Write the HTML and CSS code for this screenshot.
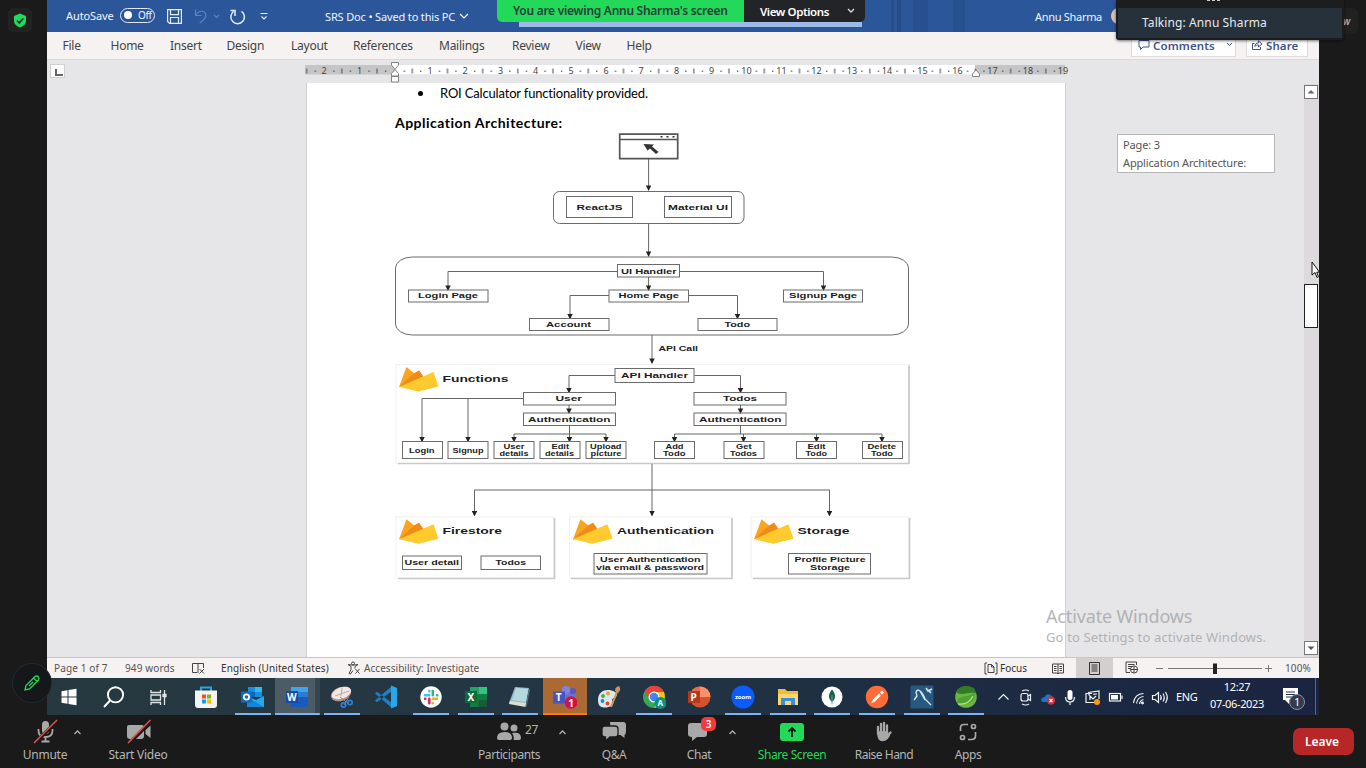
FILE: index.html
```
<!DOCTYPE html>
<html lang="en">
<head>
<meta charset="utf-8">
<title>Screen share</title>
<link rel="stylesheet" href="styles.css">
</head>
<body>
<main class="shared">
  <header class="titlebar">
    <span class="autosave">AutoSave</span>
    <span class="toggle"><i></i>Off</span>
    <svg class="qat" width="112" height="20" viewBox="0 0 112 20" fill="none" stroke="#e6eefb" stroke-width="1.2">
      <path d="M2.6 3.6h13.8v13.8H4.6l-2-2zM5.5 3.6v5h8v-5M5.500 17v-5.500h8V17"/>
      <g stroke="#5f83c0"><path d="M30.500 3.500v6h6M30.800 9.200c3-5 9-5.500 10 0 .3 3-3 5-6 8M49 9l2.500 2.500L54 9"/></g>
      <path stroke-width="1.500" d="M68.500 5.500a6.800 6.800 0 1 0 8-.2M65.500 4.500h4.500V10"/>
      <path d="M95.500 7.500h7M96.500 10.500l2.500 2.500 2.500-2.500"/>
    </svg>
    <span class="doc-name">SRS Doc • Saved to this PC</span>
    <svg class="doc-chev" width="10" height="8" fill="none" stroke="#fff" stroke-width="1.200"><path d="M1 2l4 4 4-4"/></svg>
    <span class="stripes"></span>
    <span class="owner">Annu Sharma</span>
    <span class="avatar"></span>
  </header>
  <nav class="menu">
    <span>File</span><span>Home</span><span>Insert</span><span>Design</span><span>Layout</span><span>References</span><span>Mailings</span><span>Review</span><span>View</span><span>Help</span>
    <b class="btn comments"><svg width="12" height="12" fill="none" stroke="#3f5490"><path d="M1 1.500h10v6.500H5L2.500 10.500V8H1z"/></svg>Comments<svg class="tiny" width="7" height="6" fill="none" stroke="#3f5490"><path d="M1 1l2.500 2.500L6 1"/></svg></b>
    <b class="btn share"><svg width="12" height="12" fill="none" stroke="#3f5490"><path d="M3.500 4.500H1.500v6h8V8M3.800 7.500C4 5 5.500 4 7.500 4V1.800L11 5 7.500 8V6C6 6 4.800 6.300 3.800 7.500z"/></svg>Share</b>
  </nav>
  <section class="workspace">
    <div class="gutter"><span class="tabstop"></span></div>
    <div class="column">
      <svg class="ruler" width="765" height="23" viewBox="305 60 765 23">
        <defs>
          <pattern id="ticks" x="394.700" y="60" width="35.200" height="23" patternUnits="userSpaceOnUse">
            <rect x="9" y="10.500" width="1.200" height="1.500" fill="#555"/><rect x="17" y="8.500" width="1.100" height="5" fill="#555"/><rect x="25.500" y="10.500" width="1.200" height="1.500" fill="#555"/>
          </pattern>
        </defs>
        <rect x="305" y="65" width="760" height="9.500" fill="#c6c5c6"/>
        <rect x="395" y="65" width="580" height="9.500" fill="#fff"/>
        <rect x="305" y="60" width="754" height="23" fill="url(#ticks)"/>
        <g class="nums">
          <text x="324">2</text><text x="359.500">1</text><text x="430">1</text><text x="465">2</text><text x="500.500">3</text><text x="535.500">4</text><text x="571">5</text><text x="606">6</text><text x="641">7</text><text x="676.500">8</text><text x="711.500">9</text><text x="746.500">10</text><text x="781.500">11</text><text x="816.500">12</text><text x="852">13</text><text x="887">14</text><text x="922.500">15</text><text x="957.500">16</text><text x="992.500">17</text><text x="1028">18</text><text x="1063">19</text>
        </g>
        <g fill="#fff" stroke="#777" stroke-width=".9"><path d="M391.500 62.500h7v2.500l-3.500 4.500-3.500-4.500z"/><path d="M391.500 76v-2.500l3.500-4 3.500 4V76zM391.500 76.500h7v5.500h-7zM972.500 76.500V74l3.500-4 3.500 4v2.500z"/></g>
      </svg>
      <article class="page">
        <p class="bullet"><i></i><span>ROI Calculator functionality provided.</span></p>
        <h1>Application Architecture:</h1>
        <svg class="diagram" width="520" height="452" viewBox="394 132 520 452">
          <defs>
            <marker id="a" viewBox="0 0 6 6" refX="5" refY="3" markerWidth="5.500" markerHeight="5.500" orient="auto" markerUnits="userSpaceOnUse"><path d="M0 0L6 3 0 6z" fill="#222"/></marker>
            <g id="fire"><path d="M0 20L7.500 0l8 6.500L20 3.500l5.500 8z" fill="#fba41d"/><path d="M0 20L15.500 6 20 3.500 26 12z" fill="#ee8b19"/><path d="M0 20L34.500 5l5 14.500-20 5z" fill="#ffca2d"/></g>
          </defs>
          <g class="panels">
            <rect x="396" y="364.500" width="513" height="99"/><rect x="396" y="517" width="158" height="61"/><rect x="569.500" y="517" width="162" height="61"/><rect x="751" y="517" width="158" height="61"/>
            <path class="edge" d="M398 463.500h511v-98M398 578.500h156.500V518M571 578.500h161V518M753 578.500h156.500V518"/>
          </g>
          <use href="#fire" x="399" y="367"/><use href="#fire" x="399" y="519.300"/><use href="#fire" x="573" y="519.300"/><use href="#fire" x="754" y="519.300"/>
          <g class="wires">
            <path d="M648.600 159v31"/><path d="M648.600 224v32"/>
            <path d="M618 271.500H448v18.500"/><path d="M680 271.500h143.500V290"/><path d="M648.600 277v13"/>
            <path d="M609 295.500h-39v23"/><path d="M689 295.500h48.500v23"/>
            <path d="M652 335v28"/><path d="M615 375.500h-46V392.500"/><path d="M694.500 375.500h46v17"/>
            <path d="M523 398.500H422V441.500"/><path d="M468 398.500v43"/><path d="M569 405v8"/><path d="M740.500 405v8"/>
            <path d="M569.500 426v8H514v7.500"/><path d="M569.500 434v7.500"/><path d="M569.500 434H606v7.500"/>
            <path d="M740.500 426v8h-66v7.500"/><path d="M743.500 434v7.500"/><path d="M740.500 434h141.500v7.500"/><path d="M816.500 434v7.500"/>
            <path d="M652 464v51.500"/><path d="M652 490H474.500v25.500"/><path d="M652 490h177.500v25.500"/>
          </g>
          <g class="boxes">
            <rect x="553.500" y="191.500" width="190.500" height="32" rx="6"/><rect x="395.500" y="257" width="513" height="78" rx="17" ry="11"/>
            <rect x="566.500" y="196.500" width="66" height="21"/><rect x="664.500" y="196.500" width="67" height="21"/>
            <rect x="617.500" y="264.500" width="62" height="12.500"/><rect x="408.500" y="290" width="79.500" height="12"/><rect x="609" y="290" width="79.500" height="12"/><rect x="783.500" y="290" width="79" height="12"/>
            <rect x="529.500" y="318.500" width="79.500" height="12"/><rect x="698" y="318.500" width="79" height="12"/>
            <rect x="615" y="368.500" width="79" height="14"/><rect x="523.500" y="392.500" width="92" height="12.500"/><rect x="523.500" y="413" width="92" height="12.500"/><rect x="694" y="392.500" width="92" height="12.500"/><rect x="694" y="413" width="92" height="12.500"/>
            <rect x="402.500" y="441.500" width="40" height="17"/><rect x="448" y="441.500" width="40" height="17"/><rect x="494" y="441.500" width="40" height="17"/><rect x="540" y="441.500" width="40" height="17"/><rect x="586" y="441.500" width="40" height="17"/>
            <rect x="654.500" y="441.500" width="40" height="17"/><rect x="724" y="441.500" width="40" height="17"/><rect x="796.500" y="441.500" width="40" height="17"/><rect x="862.500" y="441.500" width="40" height="17"/>
            <rect x="402.500" y="556" width="59" height="13.500"/><rect x="481" y="556" width="59.500" height="13.500"/><rect x="594" y="553.500" width="113" height="20.500"/><rect x="788.500" y="553.500" width="82" height="20.500"/>
            <path class="thick" d="M619.700 134.200h58v24.500h-58zM619.700 139.500h58"/>
          </g>
          <g fill="#333"><rect x="660.500" y="136" width="2" height="1.500"/><rect x="666.500" y="136" width="2" height="1.500"/><rect x="672.500" y="136" width="2" height="1.500"/><path d="M643.500 144l10.500.5-2 2 6.500 5.500-2.500 2-6-5.500-2.500 2z"/></g>
          <g class="labels">
            <g class="t8">
            <text x="576.500" y="210.500" textLength="46" lengthAdjust="spacingAndGlyphs">ReactJS</text><text x="668" y="210.500" textLength="60" lengthAdjust="spacingAndGlyphs">Material UI</text>
            <text x="621" y="274.500" textLength="55.500" lengthAdjust="spacingAndGlyphs">UI Handler</text><text x="418" y="299" textLength="60" lengthAdjust="spacingAndGlyphs">Login Page</text><text x="618.500" y="299" textLength="60.500" lengthAdjust="spacingAndGlyphs">Home Page</text><text x="789" y="299" textLength="68" lengthAdjust="spacingAndGlyphs">Signup Page</text>
            <text x="546" y="328" textLength="45" lengthAdjust="spacingAndGlyphs">Account</text><text x="724.500" y="328" textLength="25.500" lengthAdjust="spacingAndGlyphs">Todo</text><text x="658.500" y="352" textLength="39.500" lengthAdjust="spacingAndGlyphs">API Call</text>
            <text x="621" y="378.700" textLength="67" lengthAdjust="spacingAndGlyphs">API Handler</text><text x="555.500" y="401.700" textLength="26.500" lengthAdjust="spacingAndGlyphs">User</text><text x="528" y="422.700" textLength="82.500" lengthAdjust="spacingAndGlyphs">Authentication</text><text x="723" y="401.700" textLength="34" lengthAdjust="spacingAndGlyphs">Todos</text><text x="699" y="422.700" textLength="82.500" lengthAdjust="spacingAndGlyphs">Authentication</text>
            </g>
            <g class="t7">
            <text x="409" y="453.500" textLength="25.500" lengthAdjust="spacingAndGlyphs">Login</text><text x="452.500" y="453.500" textLength="31" lengthAdjust="spacingAndGlyphs">Signup</text>
            <text x="503.500" y="450" textLength="21" lengthAdjust="spacingAndGlyphs">User</text><text x="499.500" y="456.500" textLength="29" lengthAdjust="spacingAndGlyphs">details</text><text x="551.500" y="450" textLength="17.500" lengthAdjust="spacingAndGlyphs">Edit</text><text x="545" y="456.500" textLength="29" lengthAdjust="spacingAndGlyphs">details</text><text x="590" y="450" textLength="31.500" lengthAdjust="spacingAndGlyphs">Upload</text><text x="590.500" y="456.500" textLength="31" lengthAdjust="spacingAndGlyphs">picture</text>
            <text x="665.500" y="450" textLength="18" lengthAdjust="spacingAndGlyphs">Add</text><text x="663" y="456.500" textLength="22.500" lengthAdjust="spacingAndGlyphs">Todo</text><text x="736" y="450" textLength="15.500" lengthAdjust="spacingAndGlyphs">Get</text><text x="730" y="456.500" textLength="27" lengthAdjust="spacingAndGlyphs">Todos</text><text x="807.500" y="450" textLength="18" lengthAdjust="spacingAndGlyphs">Edit</text><text x="805.500" y="456.500" textLength="21.500" lengthAdjust="spacingAndGlyphs">Todo</text><text x="867.500" y="450" textLength="28.500" lengthAdjust="spacingAndGlyphs">Delete</text><text x="871" y="456.500" textLength="22" lengthAdjust="spacingAndGlyphs">Todo</text>
            <text x="404.500" y="565.300" textLength="54.500" lengthAdjust="spacingAndGlyphs">User detail</text><text x="495.500" y="565.300" textLength="30.500" lengthAdjust="spacingAndGlyphs">Todos</text><text x="600" y="562.300" textLength="100.500" lengthAdjust="spacingAndGlyphs">User Authentication</text><text x="596" y="570.300" textLength="108" lengthAdjust="spacingAndGlyphs">via email &amp; password</text><text x="794.500" y="562.300" textLength="71" lengthAdjust="spacingAndGlyphs">Profile Picture</text><text x="810" y="570.300" textLength="40" lengthAdjust="spacingAndGlyphs">Storage</text>
            </g>
            <g class="t9"><text x="442.500" y="382.300" textLength="66" lengthAdjust="spacingAndGlyphs">Functions</text><text x="442.500" y="534.700" textLength="59.500" lengthAdjust="spacingAndGlyphs">Firestore</text><text x="617" y="534.700" textLength="97" lengthAdjust="spacingAndGlyphs">Authentication</text><text x="797.500" y="534.700" textLength="52" lengthAdjust="spacingAndGlyphs">Storage</text></g>
          </g>
        </svg>
      </article>
    </div>
    <aside class="right"><div class="tip">Page: 3<br>Application Architecture:</div></aside>
    <div class="scroll"><span class="sb"><svg width="13" height="13"><path d="M2.500 7.500l3.500-3.500 3.500 3.500z" fill="#666"/></svg></span><span class="thumb"></span><span class="sb"><svg width="13" height="13"><path d="M2.500 4.500l3.500 3.500L9.500 4.500z" fill="#555"/></svg></span></div>
  </section>
  <footer class="status">
    <span class="s1">Page 1 of 7</span><span class="s2">949 words</span>
    <svg class="s3" width="15" height="14" fill="none" stroke="#444"><path d="M7 2.500v9.500M7 2.500H1.500v9H6M7 2.500h5.500V7M8.500 8l4.500 4.500M13 8l-4.500 4.500"/></svg>
    <span class="s4">English (United States)</span>
    <svg class="s5" width="14" height="14" fill="none" stroke="#444"><circle cx="6" cy="2.500" r="1.500"/><path d="M1 3.500l3 2v3l-2 4 1.500.5L6 9.500M11 3.500l-3 2v2M1 3.500l3.500.5h3L11 3.500M8.500 8l4 4.500M12.500 8l-4 4.500"/></svg>
    <span class="s6">Accessibility: Investigate</span>
    <svg class="s7" width="14" height="13" fill="none" stroke="#444"><path d="M3 1H1v11h2M11 1h2v11h-2M4 2.500h3.500L10 5v5.500H4zM7.500 2.500V5H10"/></svg>
    <span class="s8">Focus</span>
    <svg class="s9" width="14" height="13" fill="none" stroke="#444"><path d="M7 2v10M7 2H1.500v9H6l1 1 1-1h4.500V2zM3 4.500h2.500M3 6.500h2.500M3 8.500h2.500M8.500 4.500H11M8.500 6.500H11M8.500 8.500H11"/></svg>
    <span class="view-on"><svg width="11" height="13" fill="none" stroke="#333"><path d="M.5.5h10v12H.5zM2.500 3h6M2.500 5h6M2.500 7h6M2.500 9h6"/></svg></span>
    <svg class="s10" width="14" height="14" fill="none" stroke="#444"><path d="M11.500 4V1H1v10.500h4M3 3.500h6.500M3 5.500h4M3 7.500h2.500"/><circle cx="9" cy="8.500" r="3.600"/><path d="M5.500 8.500h7M9 5v7"/></svg>
    <svg class="zoomer" width="118" height="13" stroke="#777"><path d="M1 6.500h7M13 6.500h94M110 6.500h7M113.500 3v7"/><rect x="58.500" y="2" width="3" height="9.500" fill="#222" stroke="#222"/></svg>
    <span class="pct">100%</span>
  </footer>
  <div class="taskbar">
    <span class="cell"><svg viewBox="0 0 24 24"><path fill="#fff" d="M4.500 6.200l6-1v6.300h-6zM11.500 5l8-1.200v7.700h-8zM4.500 12.500h6v6.200l-6-.9zM11.500 12.500h8v7.700l-8-1.200z"/></svg></span>
    <span class="cell"><svg viewBox="0 0 24 24" fill="none" stroke="#fff" stroke-width="1.900"><circle cx="13.500" cy="9.800" r="7.600"/><path d="M8 15.500l-6 6.500"/></svg></span>
    <span class="cell"><svg viewBox="0 0 24 24" fill="none" stroke="#dfe6ea" stroke-width="1.300"><path d="M5 5v2.500h9.500V5M5 10h9.500v5H5zM5 20v-2.500h9.500V20M18.500 5v15M17 9.500h3v2h-3z"/></svg></span>
    <span class="cell store"><svg viewBox="0 0 24 24"><path d="M7 6V2.500h10V6" fill="none" stroke="#26a8e0" stroke-width="2"/><path d="M1 5.500h22V20q0 3-3 3H4q-3 0-3-3z" fill="#f3f3f3"/><path d="M8 9.500h4v4H8z" fill="#f25022"/><path d="M13 9.500h4v4h-4z" fill="#7fba00"/><path d="M8 14.500h4v4H8z" fill="#00a4ef"/><path d="M13 14.500h4v4h-4z" fill="#ffb900"/></svg></span>
    <span class="cell run outlook"><svg viewBox="0 0 24 24"><path d="M7 2h14v10H7z" fill="#1490df"/><path d="M14 2h7v5h-7z" fill="#35b8f1"/><path d="M7 7h7v5H7z" fill="#0364b8"/><path d="M6 20V11l9 4 8-4v11H6z" fill="#28a8ea"/><path d="M6 12l17 10H6z" fill="#1784d8"/><rect x="0" y="6.500" width="11" height="11" fill="#0f6cbd"/><circle cx="5.500" cy="12" r="2.700" fill="none" stroke="#fff" stroke-width="1.800"/></svg></span>
    <span class="cell run word"><svg viewBox="0 0 24 24"><path d="M6 2h17v20H6z" fill="#185abd"/><path d="M6 2h17v5H6z" fill="#41a5ee"/><path d="M6 7h17v5H6z" fill="#2b7cd3"/><rect x="1" y="6" width="12" height="12" fill="#174aa5"/><text x="2" y="16" class="ltr">W</text></svg></span>
    <span class="cell run"><svg viewBox="0 0 24 24"><ellipse cx="11" cy="9" rx="10.500" ry="6.800" fill="#b5928c" transform="rotate(-20 11 9)"/><ellipse cx="11.500" cy="7.800" rx="10" ry="5.600" fill="#f1e8e6" transform="rotate(-20 12 8)"/><path d="M12 3l-1 8M5 11l14-5" stroke="#c9a49e"/><path d="M10 12l9 7M19 12l-5 8" stroke="#7d8b93"/><g fill="none" stroke="#2684d8" stroke-width="1.700"><circle cx="13.500" cy="20" r="2.200"/><circle cx="20" cy="17.500" r="2.200"/></g></svg></span>
    <span class="cell"><svg viewBox="0 0 24 24"><path d="M1 8.500l2-1.700L18 18v5zM1 15.500l2 1.700L18 6V1z" fill="#1b80c8"/><path d="M17 .5l6 2.500v18l-6 2.500z" fill="#2ba5ea"/></svg></span>
    <span class="cell run"><svg viewBox="0 0 24 24"><circle cx="12" cy="12" r="10.700" fill="#fff"/><g stroke-width="2.500" stroke-linecap="round"><path d="M10.300 6v.3M6 10.300h4.300" stroke="#36c5f0"/><path d="M13.800 6v4.300M18 10.300h.2" stroke="#2eb67d"/><path d="M13.800 13.800h4.300M13.800 18v.2" stroke="#ecb22e"/><path d="M10.300 13.800v4.400M6 13.800h.3" stroke="#e01e5a"/></g></svg></span>
    <span class="cell run"><svg viewBox="0 0 24 24"><path d="M6 2h17v20H6z" fill="#107c41"/><path d="M14.500 2H23v7h-8.500z" fill="#33c481"/><path d="M6 2h8.500v7H6z" fill="#21a366"/><path d="M14.500 15H23v7h-8.500z" fill="#185c37"/><rect x="1" y="6" width="12" height="12" fill="#0e6c39"/><text x="3.500" y="16" class="ltr">X</text></svg></span>
    <span class="cell run"><svg viewBox="0 0 24 24"><path d="M7 2l14 1-3.500 18L1 18z" fill="#91bdc4"/><path d="M8 3l12 1-2 13L4 15z" fill="#b4d9de"/><path d="M2 16l16 2-.5 4L1 19z" fill="#e1ded0"/><path d="M21 4l1 1-3.500 17-1-1z" fill="#537985"/></svg></span>
    <span class="cell teams"><svg viewBox="0 0 24 24"><circle cx="13" cy="5" r="4" fill="#7b83eb"/><circle cx="20" cy="6" r="3" fill="#5059c9"/><path d="M8 9h15v8q-3 5-9 4-6-1-6-7z" fill="#6b72d0"/><rect x="0" y="6.500" width="12" height="12" fill="#4b53bc"/><text x="2.800" y="16" class="ltr">T</text><circle cx="18" cy="17.500" r="6.300" fill="#cf1346"/><text x="15.300" y="21.500" class="ltr">1</text></svg></span>
    <span class="cell"><svg viewBox="0 0 24 24"><path d="M1 15C1 5 11 3 18 7c3 2 2 5-1 6s-2 3-1 5-3 4.500-8 4.500S1 20 1 15z" fill="#dbe7ed"/><circle cx="6" cy="11" r="1.900" fill="#3fae49"/><circle cx="11" cy="8.500" r="1.900" fill="#e7a12c"/><circle cx="5.500" cy="16" r="1.900" fill="#2c83d5"/><circle cx="10.500" cy="18.500" r="1.900" fill="#d94436"/><path d="M20 7l-6 15" stroke="#d59a46" stroke-width="2"/><path d="M18 6c0-3 1-4 4-5 2 3 1 5-1 7z" fill="#c9955c"/></svg></span>
    <span class="cell run"><svg viewBox="0 0 24 24"><circle cx="12" cy="12" r="11" fill="#34a853"/><path d="M2.500 6.500A11 11 0 0 1 22 7H12z" fill="#ea4335"/><path d="M2.500 6.500L8 15l4-9z" fill="#ea4335"/><path d="M12 7h10q3 9-5 14.500L12 23l5-8z" fill="#fbc116"/><circle cx="12" cy="12" r="5.500" fill="#fff"/><circle cx="12" cy="12" r="4.200" fill="#4285f4"/><circle cx="18.500" cy="18" r="6" fill="#128c7e"/><text x="15.500" y="21" class="ltr sm">A</text></svg></span>
    <span class="cell"><svg viewBox="0 0 24 24"><circle cx="13" cy="12" r="10.500" fill="#d35230"/><path d="M13 1.500A10.500 10.500 0 0 1 23.500 12H13z" fill="#ff8f6b"/><path d="M13 1.500V12H2.500A10.500 10.500 0 0 1 13 1.500z" fill="#ed6c47"/><rect x="1" y="6" width="12" height="12" fill="#b7391d"/><text x="3.500" y="16" class="ltr">P</text></svg></span>
    <span class="cell run"><svg viewBox="0 0 24 24"><circle cx="12" cy="12" r="11.500" fill="#0b5cff"/><text x="4" y="14" class="zm" textLength="16">zoom</text></svg></span>
    <span class="cell run"><svg viewBox="0 0 24 24"><path d="M2 4h7l2 2h11v14H2z" fill="#f2bb40"/><path d="M2 9h20v11H2z" fill="#ffd86b"/><path d="M5 13h14v7h-4v-4H9v4H5z" fill="#3b8edb"/></svg></span>
    <span class="cell run"><svg viewBox="0 0 24 24"><circle cx="12" cy="12" r="10.500" fill="#fff"/><path d="M12 4.500c-4 5-4 9 0 12.500 4-3.500 4-7.500 0-12.500z" fill="#116149"/><path d="M12 10v9.500" stroke="#7ca88f"/></svg></span>
    <span class="cell run"><svg viewBox="0 0 24 24"><circle cx="12" cy="12" r="11.200" fill="#ff6c37"/><path d="M6 18.500l2-4 6-6 2 2-6 6zM15 7.500l2-2 2 2-2 2z" fill="#fff"/></svg></span>
    <span class="cell run"><svg viewBox="0 0 24 24"><rect x=".5" y=".5" width="23" height="23" rx="1" fill="#27587f"/><path d="M4 15l3-4-1-4q1-3 4-1 3 2 5 8l6 6M10 6l5 9" fill="none" stroke="#d9e8ef" stroke-width="1.300"/><path d="M16 3l2 3 4-2M18 5l3 3" fill="none" stroke="#d9e8ef" stroke-width="1.500"/></svg></span>
    <span class="cell run"><svg viewBox="0 0 24 24"><circle cx="12" cy="12" r="10.800" fill="#6db33f"/><path d="M2 7C5 1 14 0 20 3l2 6C17 5 8 12 2 7z" fill="#2e7d25"/><path d="M3 18c1-9 11-5 17-10 2 8-5 13-17 10z" fill="#4aa134"/><path d="M4 19c7 1 12-2 15-8" fill="none" stroke="#b6e38c" stroke-width="1.300"/></svg></span>
    <svg class="tray" width="190" height="24" viewBox="994 684 190 24" fill="none" stroke="#f1f4f8" stroke-width="1.200">
      <path d="M998.500 698.500l5-5 5 5"/>
      <rect x="1021" y="692.500" width="7" height="7.500" rx="2"/><path d="M1028 695l2.500-1.500v6l-2.500-1.500M1022 690q4-2 7 0M1022 703q4 2 7 0"/>
      <path d="M1041 700c0-3 2-4 4-4 1-4 6-3 7 0 3 0 3 4 0 5h-9z" fill="#1478c8" stroke="none"/><circle cx="1051" cy="699.500" r="4.200" fill="#cf3141" stroke="none"/><path d="M1049.500 698l3 3M1052.500 698l-3 3"/>
      <rect x="1067.500" y="689" width="5" height="10" rx="2.500" fill="#fff" stroke="none"/><path d="M1065.500 696q0 5 4.500 5t4.500-5M1070 701v3"/>
      <path d="M1095 701.500h-9v-9h5M1092 692.500h-3v2M1088 691.500l11-1.500v8M1090 699v-4l3 3 3-3M1094 694v-1h3"/><circle cx="1097" cy="701" r="3" fill="#ff9900" stroke="none"/>
      <rect x="1109.500" y="692.500" width="11" height="7.500"/><path d="M1122 694.500v3.500"/><rect x="1111" y="694" width="7" height="4.500" fill="#fff" stroke="none"/>
      <path d="M1133.500 702q1-9 10-9.500M1136.500 702.500q1-6.500 7-7M1139.500 703q.5-3.500 4-4.500" /><circle cx="1142.500" cy="702" r=".8" fill="#fff"/>
      <path d="M1152.500 694.500h2.500l3.500-3v10l-3.500-3h-2.500zM1160.500 694q1.500 2.500 0 5M1163 692.500q2.500 4 0 8M1165.500 691q3.500 5.500 0 11"/>
    </svg>
    <span class="lang">ENG</span>
    <span class="clock">12:27<br>07-06-2023</span>
    <svg class="notif" width="26" height="28"><path d="M3 5h15v12h-9v4l-4-4H3z" fill="#fff"/><path d="M6 9h9M6 11.500h9M6 14h6" stroke="#24304a"/><circle cx="17" cy="19" r="7.500" fill="#343b4c" stroke="#8b919d"/><text x="14" y="23" class="nn">1</text></svg>
    <span class="peek"></span>
  </div>
</main>

<div class="toolbar">
  <div class="tool unmute"><div class="ico"><svg width="26" height="26"><rect x="9" y="2" width="7" height="13" rx="3.500" fill="#a8a8a8"/><path d="M5.500 10v1.500q0 6.500 7 6.500t7-6.500V10M12.500 18v4M8.500 22.500h8" fill="none" stroke="#a8a8a8" stroke-width="1.800"/><path d="M2 24L24.500 1.500" stroke="#1a1a1a" stroke-width="3.500"/><path d="M1 24L24 1" stroke="#e5544e" stroke-width="1.500"/></svg></div>Unmute</div>
  <svg class="caret" width="9" height="6"><path d="M1.500 5l3-3 3 3"/></svg>
  <div class="tool video"><div class="ico"><svg width="26" height="26"><path d="M3 6h13q2 0 2 2v9q0 3-3 3H4q-3 0-3-3V8q0-2 2-2zM19.500 11l5-4.500V19l-5-4z" fill="#a8a8a8"/><path d="M3 24.500L25.500 2" stroke="#1a1a1a" stroke-width="3.500"/><path d="M2 24L24.500 1" stroke="#e5544e" stroke-width="1.500"/></svg></div>Start Video</div>
  <div class="tool people"><div class="ico"><svg width="26" height="22" fill="#a8a8a8"><circle cx="8.500" cy="5.500" r="4"/><circle cx="18" cy="7" r="3.500"/><path d="M1 17q0-6 7.500-6t7.500 6q0 2-3 2H4q-3 0-3-2zM16 12q9-1.500 9 5 0 2-3 2h-4.500q1-4-1.500-7z"/></svg><em>27</em></div>Participants</div>
  <svg class="caret c2" width="9" height="6"><path d="M1.500 5l3-3 3 3"/></svg>
  <div class="tool qa"><div class="ico"><svg width="26" height="22" fill="#a8a8a8"><path d="M9 1h13q3 0 3 3v6q0 3-1.500 4v3l-4-3H10z"/><path d="M4 5h10q3 0 3 3v5q0 3-3 3H9l-4.500 4v-4Q1 16 1 13V8q0-3 3-3z" stroke="#1a1a1a" stroke-width="1.300"/></svg></div>Q&amp;A</div>
  <div class="tool chat"><div class="ico"><svg width="24" height="22" fill="#a8a8a8"><path d="M4 2h13q3 0 3 3v8q0 3-3 3h-7l-5 4v-4Q1 16 1 13V5q0-3 3-3z"/></svg><span class="badge">3</span></div>Chat</div>
  <svg class="caret c3" width="9" height="6"><path d="M1.500 5l3-3 3 3"/></svg>
  <div class="tool sharescr"><div class="ico"><svg width="24" height="20"><rect y="1" width="24" height="18" rx="3" fill="#23d959"/><path d="M12 15V6M8.500 9.500L12 6l3.500 3.500" stroke="#151515" stroke-width="1.800" fill="none"/></svg></div>Share Screen</div>
  <div class="tool raise"><div class="ico"><svg width="20" height="22" fill="none" stroke="#a8a8a8" stroke-width="2.300" stroke-linecap="round"><path d="M4 13V6M7 11V3M10 11V2M13 12V4.500M13 15l3.500-3.500"/><path d="M4 11h9v3l3-2q-2 7-7 7.500Q4 20 4 13z" fill="#a8a8a8" stroke-width="1.500"/></svg></div>Raise Hand</div>
  <div class="tool apps"><div class="ico"><svg width="18" height="18" fill="none" stroke="#a8a8a8" stroke-width="1.700"><path d="M1.500 8V5q0-3.500 3.500-3.500h4M16.500 9v3.500q0 4-4 4H9"/><circle cx="14.500" cy="3.500" r="2"/><circle cx="3.500" cy="14.500" r="2"/></svg></div>Apps</div>
  <button class="leave">Leave</button>
</div>

<div class="banner"><span class="viewing">You are viewing Annu Sharma's screen</span><span class="options">View Options<svg width="8" height="6" fill="none" stroke="#ddd" stroke-width="1.300"><path d="M1 1l3 3 3-3"/></svg></span></div>
<div class="name-pill"><i>w</i></div>
<div class="talking"><span class="grip"></span><div>Talking: Annu Sharma</div></div>
<div class="shield"><svg width="14" height="15"><path d="M7 .5l6 2.500v5q0 4-6 6.500Q1 12 1 8V3z" fill="#23d959"/><path d="M4 7.500l2.300 2.300L10.300 5.500" stroke="#123" stroke-width="1.500" fill="none"/></svg></div>
<div class="pen"><svg width="18" height="18" fill="none" stroke="#23d959" stroke-width="1.300"><path d="M2 16l1-4.500 9-9q1.700-1.200 3.200.3t.3 3.200l-9 9zM10.500 4l3.500 3.500M6 12l4-4"/></svg></div>
<div class="wm"><strong>Activate Windows</strong><span>Go to Settings to activate Windows.</span></div>
<svg class="pointer" width="10" height="18"><path d="M1 1v13l3-2.500 2 5 1.500-.8-1.800-4.500h2.800z" fill="#fff" stroke="#111"/></svg>
</body>
</html>
```
FILE: styles.css
```
* { box-sizing: border-box; }
body { margin: 0; width: 1366px; height: 768px; overflow: hidden; position: relative; background: #1a1a1a; font-family: "Noto Sans", "Open Sans", sans-serif; font-size: 12px; color: #444; white-space: nowrap; }
svg { display: block; flex: none; }
i, em { font-style: normal; }
.shared { width: 1272px; height: 715px; margin-left: 47px; display: flex; flex-direction: column; }

.titlebar { height: 32px; flex: none; background: #2b569a; display: flex; align-items: center; color: #f0f5ff; font-size: 11px; overflow: hidden; }
.titlebar > * { flex: none; }
.autosave { margin: -2px 0 0 19px; width: 54px; letter-spacing: -.1px; }
.toggle { width: 35px; height: 15px; margin-top: -2px; border: 1.300px solid #dfe9fa; border-radius: 8px; display: flex; align-items: center; padding-left: 3px; gap: 6px; font-size: 10px; letter-spacing: -.4px; }
.toggle i { width: 8px; height: 8px; border-radius: 50%; background: #fff; }
.qat { margin-left: 10px; }
.doc-name { margin-left: 48px; width: 134px; letter-spacing: -.15px; }
.stripes { width: 230px; height: 32px; margin-left: 414px; background: linear-gradient(90deg, transparent 0 8px, #264c89 8px 11px, transparent 11px 14px, #264c89 14px 18px, transparent 18px 30px, #285090 30px 45px, transparent 45px 70px, #27508f 70px 82px, transparent 82px); }
.owner { margin-left: -78px; width: 76px; letter-spacing: -.3px; }
.avatar { width: 26px; height: 20px; border-radius: 50%; background: #dcbfa6; }

.menu { height: 28px; flex: none; background: #f5f2f1; display: grid; grid-template-columns: 48px 59.500px 56.500px 64.500px 62px 86px 73px 63.500px 51px 504.500px 105px 10px 62px; padding-left: 15.500px; align-items: center; border-bottom: 1px solid #dcdad6; letter-spacing: -.25px; }
.btn { align-self: start; height: 25px; background: #fff; border: 1px solid #dedcdb; color: #3f5490; display: flex; align-items: center; gap: 3px; padding: 1px 0 0 6px; font-weight: 600; font-size: 11.500px; letter-spacing: .1px; }
.btn .tiny { margin-left: 8px; }
.share { grid-column: 13; padding-left: 4px; }

.workspace { flex: 1; background: #e6e6e8; display: flex; min-height: 0; }
.gutter { width: 258px; padding: 4px 3px; }
.tabstop { display: block; width: 15px; height: 14px; background: #fff; border: 1px solid #d0d0d0; }
.tabstop::after { content: ""; display: block; width: 6px; height: 5px; margin: 4px 0 0 4px; border: solid #666; border-width: 0 0 2px 2px; }
.column { width: 765px; flex: none; }
.nums text { font: 9px "Noto Sans", sans-serif; fill: #444; text-anchor: middle; transform: translateY(74px); stroke: none; }
.page { margin-left: 1px; width: 760px; height: 574px; background: #fff; border: solid #cfcfd1; border-width: 0 1px; padding-left: 88px; color: #000; font-family: Lato, "Open Sans", sans-serif; font-variant-ligatures: none; }
.bullet { margin: 0; height: 21px; display: flex; align-items: center; font-size: 13px; padding-left: 23px; letter-spacing: -.17px; }
.bullet i { width: 5px; height: 5px; border-radius: 50%; background: #000; margin-right: 17px; }
.bullet span { margin-top: -1px; }
h1 { margin: 9px 0 0; height: 19px; line-height: 20px; font-size: 14px; font-weight: 700; letter-spacing: .48px; }
.diagram { margin-left: -1px; }
.panels rect { fill: #fff; stroke: #f0f0f0; }
.edge { fill: none; stroke: #c9c9c9; stroke-width: 1.700; }
.wires path { fill: none; stroke: #666; marker-end: url(#a); }
.wires path:first-child { stroke: #666; }
#a path { stroke: none; }
.boxes rect, .boxes path { fill: none; stroke: #6b6b6b; }
.boxes .thick { stroke-width: 1.700; stroke: #555; }
.labels { font-family: "Liberation Sans", sans-serif; font-weight: 700; fill: #1c1c1c; transform: translateY(-.6px); }
.t8 { font-size: 8px; }
.t7 { font-size: 7.300px; }
.t9 { font-size: 9.500px; }
.right { flex: 1; padding: 74px 0 0 47px; }
.tip { width: 158px; height: 39px; border: 1px solid #b6b6b8; background: #fff; padding: 1px 5px; line-height: 18px; font-size: 11px; color: #555; letter-spacing: -.15px; }
.scroll { width: 15px; display: flex; flex-direction: column; background: linear-gradient(#e6e6e8 24px, #dcdadd 24px); padding-top: 25px; }
.sb { width: 14px; height: 14px; border: 1px solid #777; background: #fff; }
.thumb { width: 14px; height: 44px; border: 1px solid #222; background: #fff; margin: 185px 0 313px; }

.status { height: 21px; flex: none; background: #f5f2f1; border-top: 1px solid #c9c7c6; display: flex; align-items: center; font-size: 10px; color: #555; }
.s1 { margin-left: 7px; width: 71px; letter-spacing: .12px; }
.s2 { width: 66px; letter-spacing: .12px; }
.s4 { margin-left: 15px; width: 126px; color: #333; letter-spacing: .1px; }
.s6 { margin-left: 3px; width: 620px; letter-spacing: .05px; }
.s8 { margin-left: 2px; width: 51px; color: #333; }
.view-on { width: 37px; height: 20px; margin-left: 11px; background: #d2cfce; display: grid; place-items: center; }
.s10 { margin-left: 12px; }
.zoomer { margin-left: 16px; }
.pct { margin-left: 12px; letter-spacing: .1px; }

.taskbar { height: 37px; flex: none; background: linear-gradient(90deg, #263940, #233544 45%, #1c2b42 75%, #1b2440); display: flex; align-items: center; }
.cell { width: 44.600px; height: 37px; flex: none; display: flex; align-items: center; justify-content: center; }
.cell svg { width: 24px; height: 24px; }
.run { background: linear-gradient(#7ab5f2, #7ab5f2) center bottom / 36px 2px no-repeat; }
.store { margin-left: 3px; }
.outlook { margin-left: 2px; }
.word { background: linear-gradient(#7ab5f2, #7ab5f2) bottom / 100% 2px no-repeat, linear-gradient(90deg, #4b5c66 40px, #34464f 40px); }
.teams { background: linear-gradient(#ff7a0a, #ff7a0a) bottom / 100% 2px no-repeat, #ab6a34; }
.ltr { font: 700 10px "Noto Sans", sans-serif; fill: #fff; }
.sm { font-size: 8px; }
.zm { font: 700 6px "Noto Sans", sans-serif; fill: #fff; }
.tray { margin-left: 5.500px; }
.lang { width: 30px; margin-left: -8px; color: #fff; font-size: 11px; letter-spacing: -.3px; }
.clock { width: 60px; margin: -3px 0 0 1px; color: #fff; font-size: 11px; line-height: 17px; text-align: center; letter-spacing: -.35px; }
.notif { margin-left: 13px; }
.nn { font: 11px "Noto Sans", sans-serif; fill: #fff; }
.peek { width: 1px; height: 37px; background: #5d6577; margin-left: 9px; }

.toolbar { height: 53px; display: flex; align-items: flex-start; color: #b5b5b5; font-size: 12px; letter-spacing: -.4px; padding-right: 12px; }
.tool { display: flex; flex-direction: column; align-items: center; line-height: 18px; flex: none; }
.ico { height: 31px; display: flex; align-items: center; justify-content: center; padding-top: 3px; position: relative; }
.unmute { margin-left: 15px; width: 60px; letter-spacing: -.25px; }
.unmute .ico, .video .ico { margin-left: 2px; }
.caret { fill: none; stroke: #b0b0b0; stroke-width: 1.300; margin: 14px 0 0 -2px; }
.video { margin-left: 16px; width: 80px; letter-spacing: -.25px; }
.people { margin-left: 291px; width: 80px; }
.people .ico { width: 60px; justify-content: flex-start; padding-left: 17px; gap: 3px; }
.people em { margin-top: -4px; }
.c2 { margin-left: 8.500px; }
.qa { margin-left: 20.500px; width: 54px; }
.chat { margin-left: 31px; width: 54px; }
.badge { position: absolute; left: 14px; top: 2px; width: 15px; height: 14px; border-radius: 5px; background: #f5383d; color: #fff; font-size: 10px; font-weight: 600; line-height: 14px; text-align: center; }
.c3 { margin-left: 1.500px; }
.sharescr { margin-left: 14.500px; width: 82px; color: #23d959; }
.raise { margin-left: 11px; width: 80px; letter-spacing: -.5px; }
.apps { margin-left: 17px; width: 54px; }
.leave { margin: 13px 0 0 auto; width: 61px; height: 27px; border: 0; border-radius: 7px; background: #b82727; color: #fff; font: 600 12px "Noto Sans", sans-serif; padding: 0 3px 0 0; }

.banner { position: absolute; left: 497px; top: 0; height: 22px; display: flex; }
.banner::before { content: ""; position: absolute; left: 22px; top: 22px; width: 343px; height: 5px; background: #9dbbe8; }
.viewing { width: 247px; background: #23d959; color: #27413a; font-weight: 600; border-radius: 0 0 0 5px; padding-left: 16px; line-height: 22px; letter-spacing: -.28px; }
.options { width: 121px; background: #222427; color: #fff; font-weight: 600; border-radius: 0 0 5px; padding-left: 16px; line-height: 21px; display: flex; align-items: center; gap: 18px; font-size: 11.500px; letter-spacing: -.4px; }
.name-pill { position: absolute; left: 1330px; top: 8px; width: 28px; height: 26px; border-radius: 6px; background: #212121; color: #ccc; font-size: 10px; line-height: 26px; padding-left: 13px; }
.name-pill i { font-style: italic; }
.talking { position: absolute; left: 1116px; top: 0; width: 228px; height: 40px; padding: 8px 2px 2px; background: #1b1d1f; border-radius: 0 0 3px 3px; box-shadow: 0 1px 3px #0008; }
.talking div { height: 30px; background: #27313b; color: #e8eaec; line-height: 30px; padding-left: 24px; letter-spacing: .1px; }
.grip { position: absolute; left: 91px; top: 0; width: 14px; height: 1px; background: repeating-linear-gradient(90deg, #ccc 0 3px, transparent 3px 5px); }
.shield { position: absolute; left: 8px; top: 8px; width: 24px; height: 24px; border-radius: 5px; background: #222; display: grid; place-items: center; }
.pen { position: absolute; left: 12px; top: 663px; width: 40px; height: 40px; border-radius: 50%; background: #14181b; border: 1px solid #252a2e; display: grid; place-items: center; }
.wm { position: absolute; left: 1046px; top: 604px; color: #a9a9ab; display: flex; flex-direction: column; opacity: .85; }
.wm strong { font-weight: 400; font-size: 18px; line-height: 25px; letter-spacing: -.15px; }
.wm span { font-size: 13px; line-height: 17px; letter-spacing: .14px; }
.pointer { position: absolute; left: 1311px; top: 261px; }
```
